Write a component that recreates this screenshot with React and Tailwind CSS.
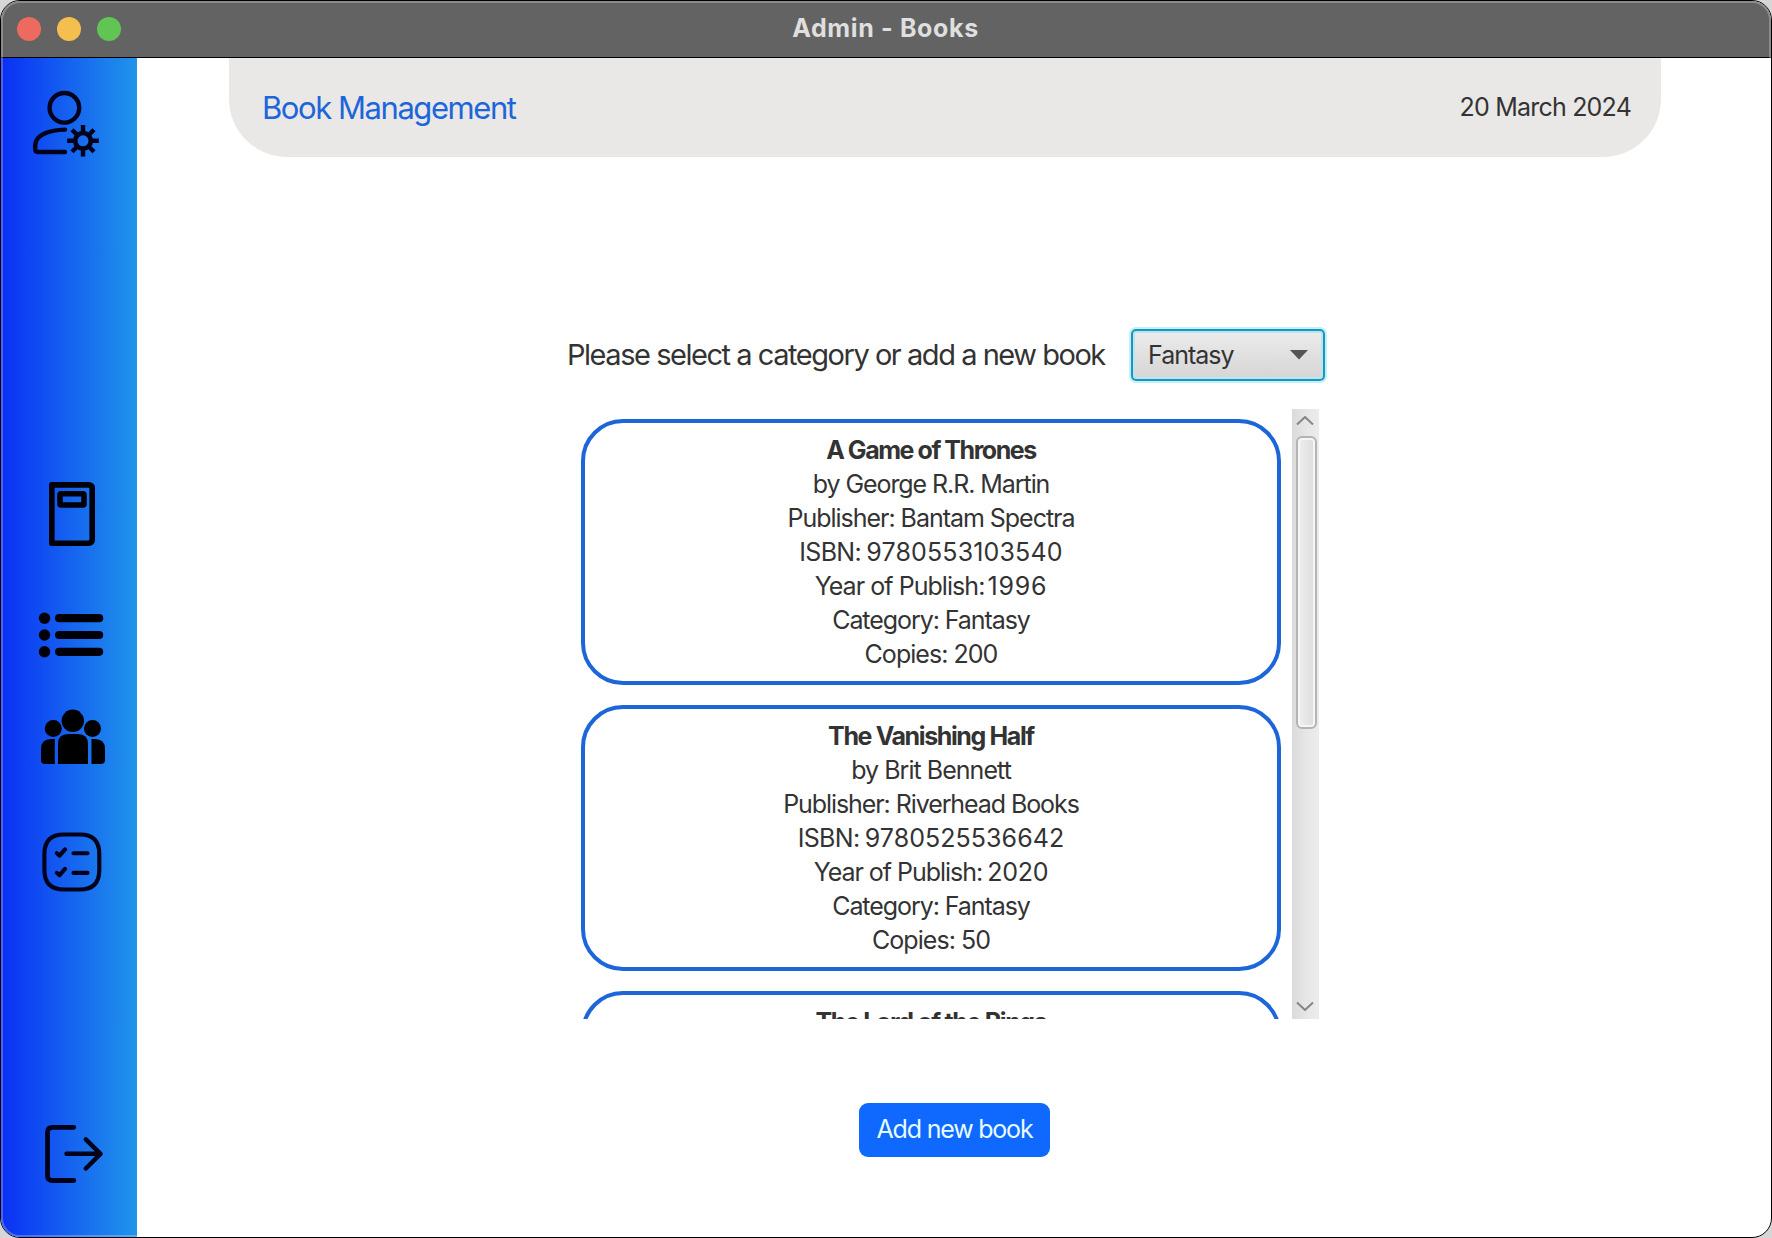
import React from "react";

const books = [
  {
    title: ["A Game of Thrones", "tracking-[-1.45px]"],
    lines: [
      ["by George R.R. Martin", "tracking-[-1.07px]"],
      ["Publisher: Bantam Spectra", "tracking-[-1.03px]"],
      ["ISBN: ", "tracking-[-0.7px]", "9780553103540", "tracking-[0.15px] -ml-px"],
      ["Year of Publish: ", "tracking-[-0.95px]", "1996", "tracking-[0.8px] -ml-[3px]"],
      ["Category: Fantasy", "tracking-[-1.07px]"],
      ["Copies: 200", "tracking-[-0.96px]"],
    ],
  },
  {
    title: ["The Vanishing Half", "tracking-[-1.38px]"],
    lines: [
      ["by Brit Bennett", "tracking-[-0.96px]"],
      ["Publisher: Riverhead Books", "tracking-[-1.08px]"],
      ["ISBN: ", "tracking-[-0.7px]", "9780525536642", "tracking-[0.06px] -ml-px"],
      ["Year of Publish: ", "tracking-[-1.03px]", "2020", "tracking-[-0.2px] -ml-px"],
      ["Category: Fantasy", "tracking-[-1.07px]"],
      ["Copies: 50", "tracking-[-0.96px]"],
    ],
  },
  {
    title: ["The Lord of the Rings", "tracking-[-1.34px]"],
    lines: [],
  },
];

function AdminIcon() {
  return (
    <svg className="h-[72px] w-[76px]" viewBox="32 88 76 72" fill="none" stroke="#02021a" strokeWidth="4.4" strokeLinecap="round" strokeLinejoin="round">
      <circle cx="64.4" cy="107.8" r="14.8" />
      <path d="M65 129.6C50 130 35.2 134.5 35.2 145.5V149.3Q35.2 152 38 152H65" />
      <circle cx="83" cy="140.8" r="7.8" strokeWidth="4.6" />
      <path
        strokeLinecap="butt"
        d="M83 132V125M83 149.6V156.6M74.2 140.8H67.2M91.8 140.8H98.8M76.8 134.6L72 129.8M89.2 147L94 151.8M76.8 147L72 151.8M89.2 134.6L94 129.8"
      />
    </svg>
  );
}

function BookIcon() {
  return (
    <svg className="h-[72px] w-[76px]" viewBox="32 478 76 72" fill="none" stroke="#000008" strokeWidth="5.6" strokeLinejoin="round">
      <path d="M51.8 484.9H88.5Q92.2 484.9 92.2 488.6V539.5Q92.2 543.2 88.5 543.2H51.8Z" />
      <rect x="60" y="493.7" width="24" height="11.3" rx="1" />
    </svg>
  );
}

function ListIcon() {
  return (
    <svg className="h-[50px] w-[76px]" viewBox="32 610 76 50" fill="#000008">
      {[618.2, 635, 651.8].map((y) => (
        <g key={y}>
          <circle cx="44.5" cy={y} r="5.7" />
          <rect x="55" y={y - 4.1} width="48.2" height="8.2" rx="4.1" />
        </g>
      ))}
    </svg>
  );
}

function UsersIcon() {
  return (
    <svg className="h-[62px] w-[76px]" viewBox="32 706 76 62" fill="#000">
      <circle cx="72.8" cy="720.8" r="11.2" />
      <circle cx="53.3" cy="728.4" r="8.5" />
      <circle cx="92.5" cy="728.4" r="8.5" />
      <path d="M58 764V744Q58 734 68 734H78Q88 734 88 744V764Z" />
      <path d="M54.8 739V764H45Q41 764 41 760V749Q41 739 51 739Z" />
      <path d="M91.5 739V764H101Q105 764 105 760V749Q105 739 95 739Z" />
    </svg>
  );
}

function ChecklistIcon() {
  return (
    <svg className="h-[68px] w-[76px]" viewBox="32 828 76 68" fill="none" stroke="#02021a" strokeWidth="4.1" strokeLinecap="round" strokeLinejoin="round">
      <path d="M64 834.5H80C93 834.5 99.3 841 99.3 854V870C99.3 883 93 889.5 80 889.5H64C51 889.5 44.4 883 44.4 870V854C44.4 841 51 834.5 64 834.5Z" />
      <path d="M56.8 853.2L59.6 855.6L65 849.3M56.8 872.8L59.6 875.2L65 868.9M73.5 853.3H87.5M73.5 872.9H87.5" />
    </svg>
  );
}

function LogoutIcon() {
  return (
    <svg className="h-[68px] w-[76px]" viewBox="32 1120 76 68" fill="none" stroke="#02021a" strokeWidth="4.8" strokeLinecap="round" strokeLinejoin="round">
      <path d="M73.8 1127.3H52.5Q47.5 1127.3 47.5 1132.3V1175.5Q47.5 1180.5 52.5 1180.5H73.8" />
      <path d="M66.5 1153.8H100M85.8 1139.3L100.5 1153.8L85.8 1168.5" strokeWidth="4.5" />
    </svg>
  );
}

function BookCard({ title, lines }) {
  return (
    <div className="h-[266px] shrink-0 rounded-[42px] border-4 border-[#1c66da] bg-white pt-2.5 text-center text-[25px] leading-[34px]">
      <p className={"font-bold " + title[1]}>{title[0]}</p>
      {lines.map(([text, tracking, value, valueStyle]) => (
        <p key={text} className={tracking}>
          {text}
          {value && <span className={valueStyle}>{value}</span>}
        </p>
      ))}
    </div>
  );
}

export default function App() {
  return (
    <div className="h-[1238px] w-[1772px] bg-[#d6d6d6] font-['Inter',sans-serif] text-[#333]">
      <div className="relative flex h-full flex-col overflow-hidden rounded-[20px] border border-black bg-white">
        <header className="flex h-[57px] shrink-0 items-center border-b border-black bg-[#636363] pl-4">
          <div className="flex w-[105px] gap-4">
            <span className="size-6 rounded-full bg-[#ec6a5e]" />
            <span className="size-6 rounded-full bg-[#f5bf4f]" />
            <span className="size-6 rounded-full bg-[#61c554]" />
          </div>
          <h1 className="flex-1 pr-[122px] pb-0.5 text-center text-[25px] leading-none font-bold tracking-[0.65px] text-[#dfdfdf]">Admin - Books</h1>
        </header>

        <div className="flex min-h-0 flex-1">
          <nav className="flex w-[136px] shrink-0 flex-col bg-linear-to-r/srgb from-[#0a30f4] to-[#2094eb] pt-[30px] pl-[31px]">
            <AdminIcon />
            <div className="mt-[318px]"><BookIcon /></div>
            <div className="mt-[60px]"><ListIcon /></div>
            <div className="mt-[46px]"><UsersIcon /></div>
            <div className="mt-[60px]"><ChecklistIcon /></div>
            <div className="mt-[224px]"><LogoutIcon /></div>
          </nav>

          <main className="flex flex-1 flex-col">
            <div className="mr-[110px] ml-[92px] flex h-[99px] shrink-0 items-center justify-between rounded-b-[58px] bg-[#e9e8e7] pr-[30px] pl-[33px]">
              <h2 className="text-[31px] leading-none tracking-[-1.44px] text-[#1c66da]">Book Management</h2>
              <span className="text-[25px] leading-none tracking-[-0.8px]">20 March 2024</span>
            </div>

            <div className="mt-[171px] ml-[430px] flex h-[54px] items-center">
              <p className="w-[564px] pb-0.5 text-[29px] leading-none tracking-[-1.46px] whitespace-nowrap">Please select a category or add a new book</p>
              <button className="flex h-[52px] w-[194px] items-center justify-between rounded-[5px] border-2 border-[#1598bd] bg-linear-to-b from-[#ececec] to-[#d5d5d5] pr-[15px] pl-[15px] text-[25px] leading-none tracking-[-1px] shadow-[0_0_0_2px_#c3effa,inset_0_0_0_2px_#bfe2ec]">
                Fantasy
                <svg className="h-2.5 w-[18px]" viewBox="0 0 18 10">
                  <path d="M0 0H18L9 9.5Z" fill="#555" />
                </svg>
              </button>
            </div>

            <div className="mt-[27px] ml-[430px] flex h-[610px] w-[752px] shrink-0">
              <div className="flex flex-1 flex-col gap-5 overflow-hidden pt-2.5 pr-[11px] pl-[14px]">
                {books.map((b) => (
                  <BookCard key={b.title[0]} title={b.title} lines={b.lines} />
                ))}
              </div>
              <div className="flex w-[27px] flex-col items-center bg-linear-to-r from-[#dadada] via-[#e6e6e6] to-[#ececec]">
                <svg className="mt-[7px] mr-px h-2.5 w-[18px]" viewBox="0 0 18 10" fill="none" stroke="#858585" strokeWidth="2">
                  <path d="M1 8.5L9 1L17 8.5" />
                </svg>
                <div className="mt-2.5 ml-[2px] h-[293px] w-[21px] rounded-[6px] border-2 border-[#b4b4b4] bg-linear-to-r from-[#efefef] to-[#dcdcdc] shadow-[inset_0_0_0_2px_#f6f6f6]" />
                <svg className="mt-auto mr-px mb-2 h-2.5 w-[18px]" viewBox="0 0 18 10" fill="none" stroke="#858585" strokeWidth="2">
                  <path d="M1 1.5L9 9L17 1.5" />
                </svg>
              </div>
            </div>

            <button className="mt-[84px] ml-[722px] h-[54px] w-[191px] rounded-[9px] bg-[#0f69ff] pb-0.5 text-[25px] leading-none tracking-[-1.2px] text-[#e6fbff]">Add new book</button>
          </main>
        </div>

        <div className="pointer-events-none absolute inset-0 rounded-[19px] border-2 border-white/25" />
      </div>
    </div>
  );
}
